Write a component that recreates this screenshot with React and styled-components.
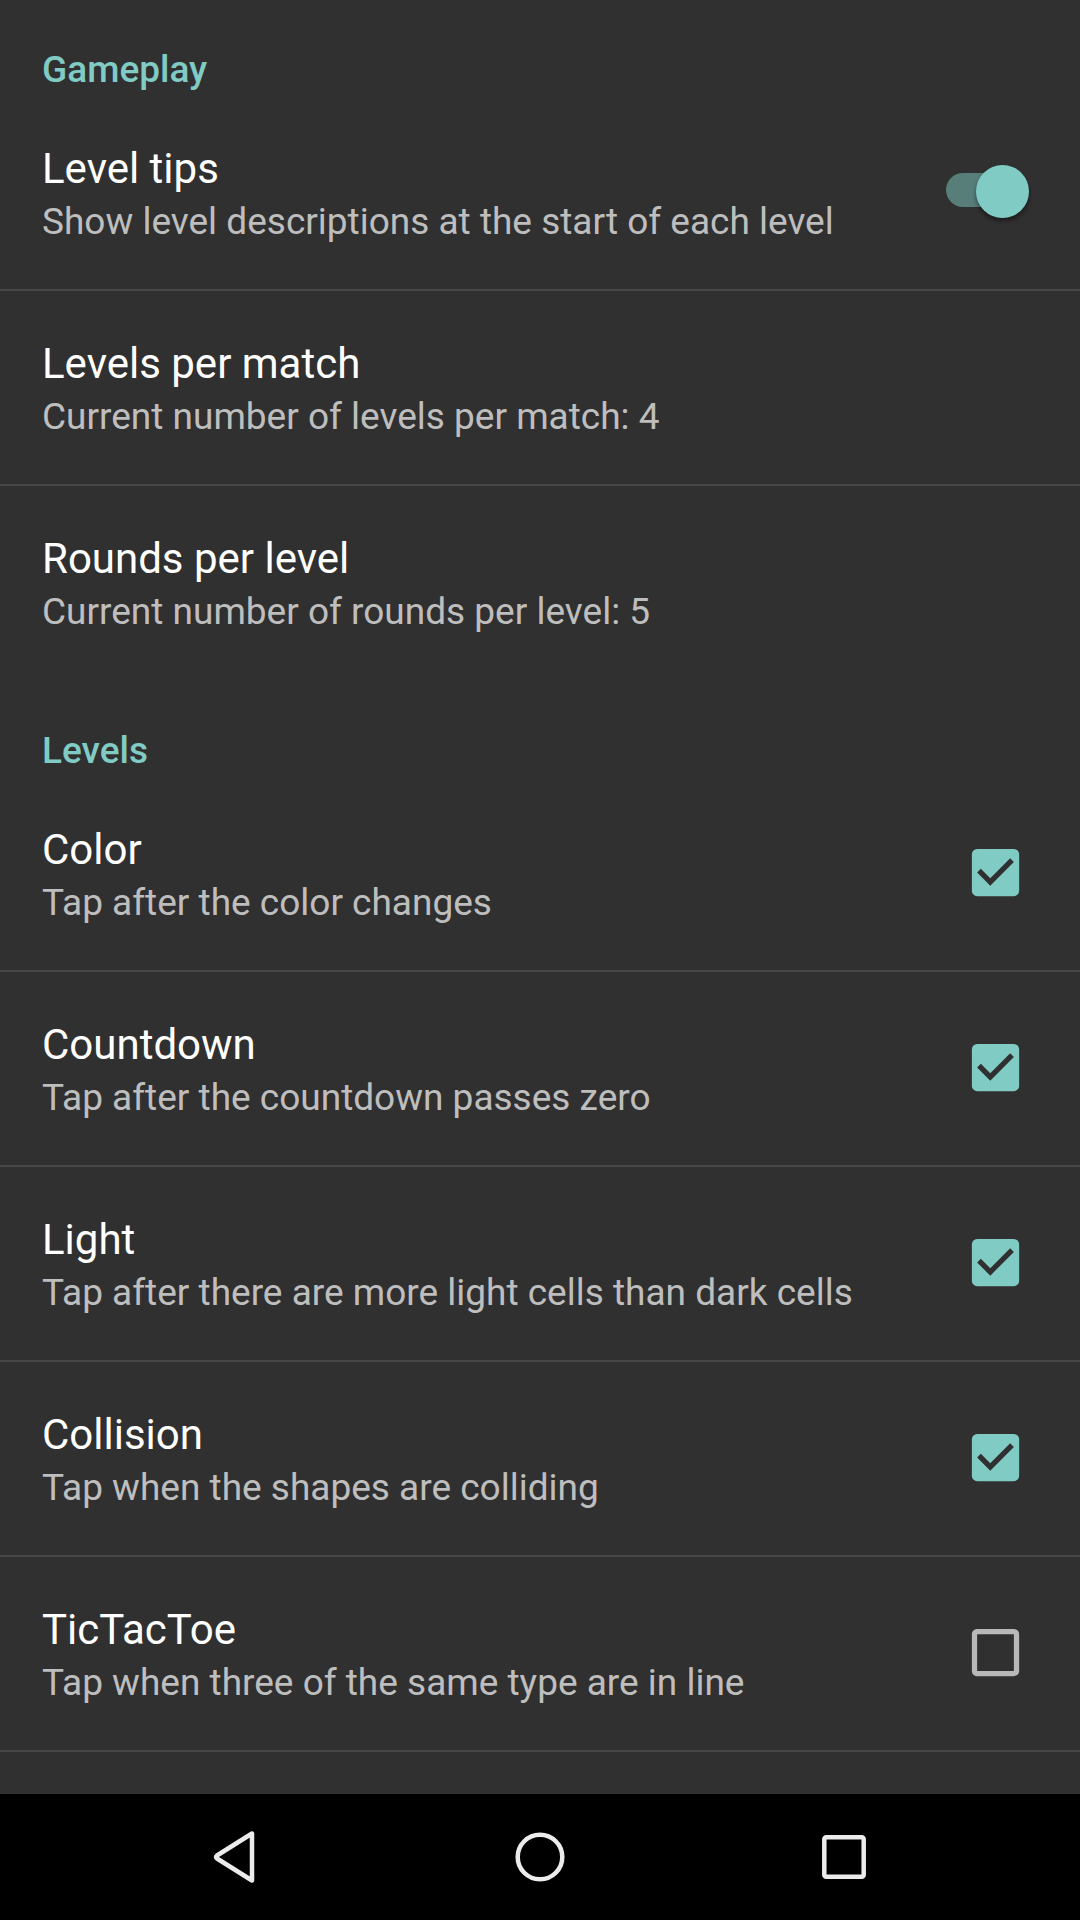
import React from "react";
import styled, { createGlobalStyle } from "styled-components";

const GlobalStyle = createGlobalStyle`
  html, body {
    margin: 0;
    padding: 0;
    background: #303030;
  }
  * {
    box-sizing: border-box;
  }
`;

const Screen = styled.div`
  width: 1080px;
  height: 1920px;
  display: flex;
  flex-direction: column;
  background: #303030;
  font-family: Roboto, "Liberation Sans", sans-serif;
  overflow: hidden;
`;

const List = styled.div`
  flex: 1;
  display: flex;
  flex-direction: column;
  overflow: hidden;
`;

const CategoryTitle = styled.div`
  padding: 48px 42px 4px;
  height: 96px;
  font-size: 37px;
  line-height: 44px;
  font-weight: 500;
  color: #80cbc4;
`;

const Row = styled.div`
  display: flex;
  align-items: center;
  min-height: 195px;
  padding: 48px 45px 39px 42px;
  border-bottom: 2px solid ${({ $last }) => ($last ? "transparent" : "#474747")};
  flex-shrink: 0;
`;

const EmptyRow = styled.div`
  flex-shrink: 0;
  height: 195px;
`;

const TextCol = styled.div`
  flex: 1;
  display: flex;
  flex-direction: column;
  align-self: flex-start;
`;

const Title = styled.div`
  font-size: 42px;
  line-height: 50px;
  color: #ffffff;
`;

const Summary = styled.div`
  font-size: 37px;
  line-height: 56px;
  color: rgba(255, 255, 255, 0.7);
`;

const SwitchTrack = styled.div`
  position: relative;
  width: 78px;
  height: 34px;
  border-radius: 17px;
  background: ${({ $on }) => ($on ? "rgba(128, 203, 196, 0.5)" : "rgba(255,255,255,0.3)")};
  margin-right: 11px;
  margin-top: -14px;
`;

const SwitchThumb = styled.div`
  position: absolute;
  top: -8px;
  left: ${({ $on }) => ($on ? "30px" : "0")};
  width: 53px;
  height: 53px;
  border-radius: 50%;
  background: ${({ $on }) => ($on ? "#80cbc4" : "#bdbdbd")};
  box-shadow: 0 3px 4px rgba(0, 0, 0, 0.45);
`;

const CheckWrap = styled.div`
  width: 63px;
  height: 63px;
  margin-right: 8px;
  margin-top: -12px;
  display: flex;
  align-items: center;
  justify-content: center;
`;

const NavBar = styled.div`
  height: 126px;
  flex-shrink: 0;
  background: #000000;
  display: flex;
  align-items: center;
  padding: 0 84px;
`;

const NavSlot = styled.div`
  width: 304px;
  height: 126px;
  display: flex;
  align-items: center;
  justify-content: center;
`;

const Switch = ({ on }) => (
  <SwitchTrack $on={on}>
    <SwitchThumb $on={on} />
  </SwitchTrack>
);

const CheckBox = ({ checked }) => (
  <CheckWrap>
    {checked ? (
      <svg width="63" height="63" viewBox="0 0 24 24">
        <rect x="3" y="3" width="18" height="18" rx="2" fill="#80cbc4" />
        <path
          d="M10 17l-5-5 1.41-1.41L10 14.17l7.59-7.59L19 8l-9 9z"
          fill="#303030"
        />
      </svg>
    ) : (
      <svg width="63" height="63" viewBox="0 0 24 24">
        <path
          d="M19 5v14H5V5h14m0-2H5c-1.11 0-2 .9-2 2v14c0 1.1.89 2 2 2h14c1.1 0 2-.9 2-2V5c0-1.1-.9-2-2-2z"
          fill="#b8b8b8"
        />
      </svg>
    )}
  </CheckWrap>
);

const BackIcon = () => (
  <svg width="52" height="56" viewBox="0 0 52 56">
    <path
      d="M42 4.5 L42 51.5 L7 29.5 Q5 28 7 26.5 Z"
      fill="none"
      stroke="#ececec"
      strokeWidth="4.5"
      strokeLinejoin="round"
    />
  </svg>
);

const HomeIcon = () => (
  <svg width="54" height="54" viewBox="0 0 54 54">
    <circle cx="27" cy="27" r="22.3" fill="none" stroke="#ececec" strokeWidth="4.5" />
  </svg>
);

const RecentsIcon = () => (
  <svg width="50" height="50" viewBox="0 0 50 50">
    <rect
      x="5.3"
      y="5.3"
      width="39.4"
      height="39.4"
      rx="2"
      fill="none"
      stroke="#ececec"
      strokeWidth="4.5"
    />
  </svg>
);

const gameplay = [
  { title: "Level tips", summary: "Show level descriptions at the start of each level", kind: "switch", value: true },
  { title: "Levels per match", summary: "Current number of levels per match: 4" },
  { title: "Rounds per level", summary: "Current number of rounds per level: 5", last: true },
];

const levels = [
  { title: "Color", summary: "Tap after the color changes", value: true },
  { title: "Countdown", summary: "Tap after the countdown passes zero", value: true },
  { title: "Light", summary: "Tap after there are more light cells than dark cells", value: true },
  { title: "Collision", summary: "Tap when the shapes are colliding", value: true },
  { title: "TicTacToe", summary: "Tap when three of the same type are in line", value: false },
];

const PrefRow = ({ title, summary, kind, value, last }) => (
  <Row $last={last}>
    <TextCol>
      <Title>{title}</Title>
      <Summary>{summary}</Summary>
    </TextCol>
    {kind === "switch" && <Switch on={value} />}
    {kind === "check" && <CheckBox checked={value} />}
  </Row>
);

export default function App() {
  return (
    <>
      <GlobalStyle />
      <Screen>
        <List>
          <CategoryTitle>Gameplay</CategoryTitle>
          {gameplay.map((p) => (
            <PrefRow key={p.title} {...p} />
          ))}
          <CategoryTitle>Levels</CategoryTitle>
          {levels.map((p) => (
            <PrefRow key={p.title} kind="check" {...p} />
          ))}
          <EmptyRow />
        </List>
        <NavBar>
          <NavSlot>
            <BackIcon />
          </NavSlot>
          <NavSlot>
            <HomeIcon />
          </NavSlot>
          <NavSlot>
            <RecentsIcon />
          </NavSlot>
        </NavBar>
      </Screen>
    </>
  );
}
